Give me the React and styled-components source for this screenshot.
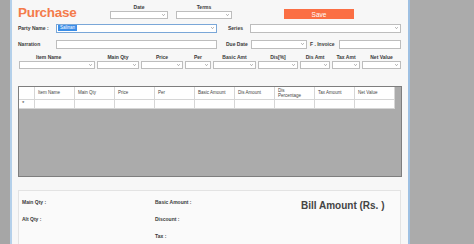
import React from 'react';
import styled, { createGlobalStyle } from 'styled-components';

const GlobalStyle = createGlobalStyle`
  html, body {
    margin: 0;
    padding: 0;
    background: #ababab;
    font-family: "Liberation Sans", Arial, sans-serif;
  }
`;

const Screen = styled.div`
  display: flex;
  width: 474px;
  height: 244px;
  overflow: hidden;
  background: #ababab;
`;

const LeftStrip = styled.div`
  width: 10px;
  flex: none;
  background: #a6a6a6;
`;

const Window = styled.div`
  width: 390px;
  flex: none;
  padding-left: 6px;
  background: #f7f7f7;
  border-left: 2px solid #b4d0ea;
  border-right: 2px solid #9ec0e2;
  display: flex;
  flex-direction: column;
`;

const Header = styled.div`
  display: flex;
  align-items: flex-start;
  height: 22px;
`;

const Title = styled.div`
  width: 92px;
  margin-top: 5px;
  font-size: 13.5px;
  font-weight: bold;
  letter-spacing: -0.3px;
  color: #f47b4b;
`;

const FieldGroup = styled.div`
  display: flex;
  flex-direction: column;
  width: ${p => p.w}px;
  margin-left: ${p => p.ml || 0}px;
  margin-top: 4px;
  gap: 1px;
`;

const Label = styled.div`
  font-size: 5px;
  font-weight: bold;
  color: #3a3a3a;
  white-space: nowrap;
  width: ${p => (p.w ? `${p.w}px` : 'auto')};
  text-align: ${p => p.align || 'left'};
  padding-left: ${p => p.pl || 0}px;
  flex: none;
`;

const Combo = styled.div`
  box-sizing: border-box;
  width: ${p => (p.w ? `${p.w}px` : '100%')};
  height: ${p => p.h || 8}px;
  flex: none;
  background: #fff;
  border: 1px solid ${p => (p.focus ? '#7aa7d8' : '#bdbdbd')};
  display: flex;
  align-items: center;
  justify-content: space-between;
  padding: 0 2px 0 1px;
`;

const Selected = styled.span`
  background: #3b8ee8;
  color: #fff;
  font-size: 4.5px;
  line-height: 6px;
  padding: 0 2px;
`;

const SaveButton = styled.button`
  margin-left: 52px;
  margin-top: 9px;
  width: 70px;
  height: 10px;
  border: none;
  padding: 0;
  background: #fb6f44;
  color: #fff;
  font-family: "Liberation Sans", Arial, sans-serif;
  font-size: 6.5px;
`;

const Row = styled.div`
  display: flex;
  align-items: center;
  height: 9px;
  margin-top: ${p => p.mt}px;
`;

const Gap = styled.div`
  width: ${p => p.w}px;
  flex: none;
`;

const ItemsGrid = styled.div`
  display: grid;
  grid-template-columns: 76px 42px 42px 26px 43px 40px 30px 28px 39px;
  column-gap: 2px;
  row-gap: 1px;
  margin-top: 5px;
  margin-left: 1px;
`;

const DataGrid = styled.div`
  box-sizing: border-box;
  width: 384px;
  height: 92px;
  margin-top: 17px;
  border: 1px solid #7e7e7e;
  background: #ababab;
  display: grid;
  grid-template-columns: 16px repeat(9, 40px);
  grid-template-rows: 13px 9px;
  align-content: start;
`;

const Cell = styled.div`
  background: #fff;
  border-right: 1px solid #d6d6d6;
  border-bottom: 1px solid #d6d6d6;
  font-size: 4.5px;
  line-height: 5px;
  color: #444;
  display: flex;
  align-items: center;
  padding-left: 3px;
`;

const Summary = styled.div`
  box-sizing: border-box;
  width: 383px;
  flex: 1;
  margin-top: 13px;
  background: #fafafa;
  border: 1px solid #e3e3e3;
  border-bottom: none;
  display: grid;
  grid-template-columns: 133px 146px 1fr;
  grid-template-rows: repeat(3, 17px);
  padding: 2px 0 0 3px;
`;

const SumLabel = styled.div`
  font-size: 5px;
  font-weight: bold;
  color: #3a3a3a;
  display: flex;
  align-items: center;
`;

const BillAmount = styled.div`
  grid-column: 3;
  grid-row: 1 / span 2;
  padding-top: 7px;
  font-size: 10px;
  font-weight: bold;
  color: #444;
`;

const RightGray = styled.div`
  flex: 1;
  background: #ababab;
`;

const Chevron = () => (
  <svg width="3" height="2" viewBox="0 0 3 2">
    <path d="M0.2 0.2 L1.5 1.6 L2.8 0.2" fill="none" stroke="#777" strokeWidth="0.6" />
  </svg>
);

const items = [
  { label: 'Item Name', align: 'left', pl: 17 },
  { label: 'Main Qty' },
  { label: 'Price' },
  { label: 'Per' },
  { label: 'Basic Amt' },
  { label: 'Dis[%]' },
  { label: 'Dis Amt' },
  { label: 'Tax Amt' },
  { label: 'Net Value' },
];

const columns = ['Item Name', 'Main Qty', 'Price', 'Per', 'Basic Amount', 'Dis Amount', 'Dis Percentage', 'Tax Amount', 'Net Value'];

export default function App() {
  return (
    <>
      <GlobalStyle />
      <Screen>
        <LeftStrip />
        <Window>
          <Header>
            <Title>Purchase</Title>
            <FieldGroup w={58}>
              <Label align="center">Date</Label>
              <Combo h={8}><span /><Chevron /></Combo>
            </FieldGroup>
            <FieldGroup w={56} ml={8}>
              <Label align="center">Terms</Label>
              <Combo h={8}><span /><Chevron /></Combo>
            </FieldGroup>
            <SaveButton>Save</SaveButton>
          </Header>

          <Row mt={2}>
            <Label w={38}>Party Name :</Label>
            <Combo w={161} h={9} focus><Selected>Salinan</Selected><Chevron /></Combo>
            <Gap w={11} />
            <Label w={22}>Series</Label>
            <Combo w={151} h={9}><span /><Chevron /></Combo>
          </Row>

          <Row mt={7}>
            <Label w={38}>Narration</Label>
            <Combo w={161} h={9} />
            <Gap w={9} />
            <Label w={25}>Due Date</Label>
            <Combo w={56} h={9}><span /><Chevron /></Combo>
            <Gap w={3} />
            <Label w={29}>F . Invoice</Label>
            <Combo w={62} h={9} />
          </Row>

          <ItemsGrid>
            {items.map(it => (
              <Label key={it.label} align={it.align || 'center'} pl={it.pl}>{it.label}</Label>
            ))}
            {items.map(it => (
              <Combo key={it.label} h={8}><span /><Chevron /></Combo>
            ))}
          </ItemsGrid>

          <DataGrid>
            <Cell />
            {columns.map(c => <Cell key={c}>{c === 'Dis Percentage' ? <span>Dis<br />Percentage</span> : c}</Cell>)}
            <Cell style={{ fontSize: '6px' }}>*</Cell>
            {columns.map(c => <Cell key={c} />)}
          </DataGrid>

          <Summary>
            <SumLabel>Main Qty :</SumLabel>
            <SumLabel>Basic Amount :</SumLabel>
            <BillAmount>Bill Amount (Rs. )</BillAmount>
            <SumLabel>Alt Qty :</SumLabel>
            <SumLabel>Discount :</SumLabel>
            <SumLabel />
            <SumLabel>Tax :</SumLabel>
          </Summary>
        </Window>
        <RightGray />
      </Screen>
    </>
  );
}
